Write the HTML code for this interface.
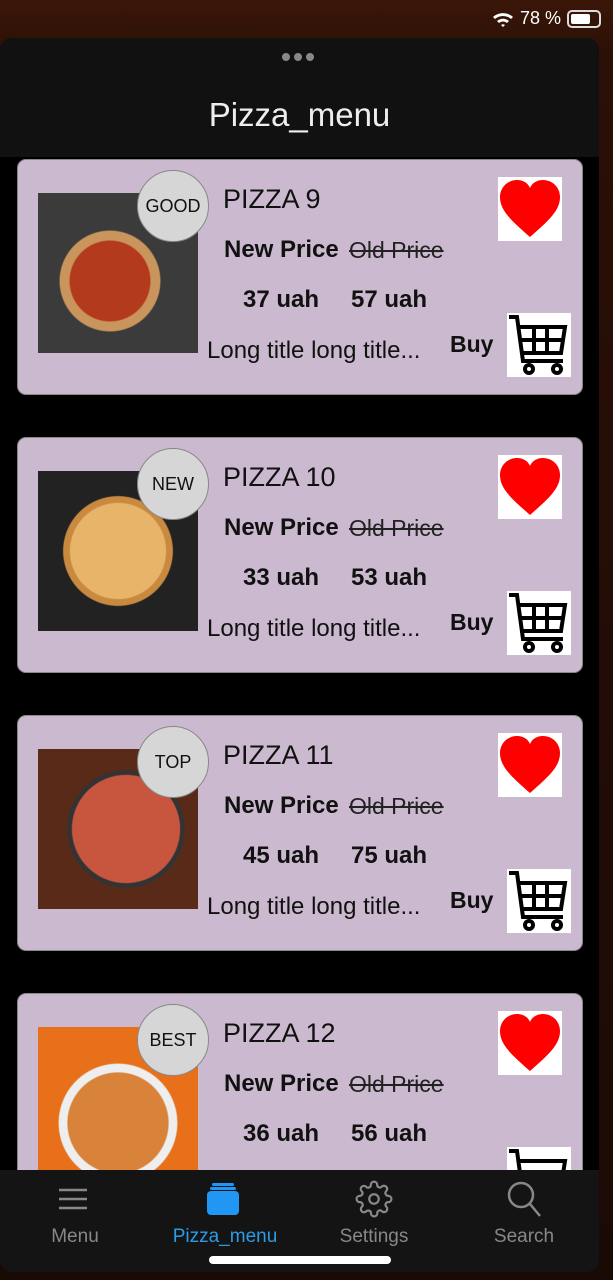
<!DOCTYPE html>
<html><head><meta charset="utf-8"><style>
*{margin:0;padding:0;box-sizing:border-box}
body{width:613px;height:1280px;overflow:hidden;background:linear-gradient(#3a1608,#2a1006 60px,#1a0a05);font-family:"Liberation Sans",sans-serif;position:relative}
.status{position:absolute;top:8px;right:12px;color:#fff;font-size:18px;display:flex;align-items:center;gap:6px}
.bat{width:34px;height:18px;border:2px solid #ddd;border-radius:5px;padding:2px;position:relative}
.bat i{display:block;width:72%;height:100%;background:#fff;border-radius:2px}
.sheet{position:absolute;left:0;top:38px;width:599px;height:1234px;background:#000;border-radius:12px;overflow:hidden}
.head{height:119px;background:#111;position:relative}
.dots{position:absolute;top:15px;left:282px;display:flex;gap:4px}
.dots i{width:8px;height:8px;border-radius:50%;background:#888}
.title{position:absolute;top:58px;width:100%;text-align:center;color:#eee;font-size:33px}
.card{position:absolute;left:17px;width:566px;height:236px;background:#cbbacf;border:1.5px solid #888;border-radius:9px}
.img{position:absolute;left:20px;top:33px;width:160px;height:160px;overflow:hidden}
.badge{position:absolute;left:119px;top:10px;width:72px;height:72px;border-radius:50%;background:#d6d6d6;border:1.5px solid #888;display:flex;align-items:center;justify-content:center;font-size:18px;color:#111}
.name{position:absolute;left:205px;top:24px;font-size:27px;color:#111}
.np{position:absolute;left:206px;top:76px;font-size:24px;font-weight:bold;color:#111}
.op{position:absolute;left:331px;top:77px;font-size:23px;text-decoration:line-through;color:#222}
.p1{position:absolute;left:225px;top:126px;font-size:24px;font-weight:bold;color:#111}
.p2{position:absolute;left:333px;top:126px;font-size:24px;font-weight:bold;color:#111}
.lt{position:absolute;left:189px;top:177px;font-size:24px;color:#111}
.buy{position:absolute;left:432px;top:171px;font-size:23px;font-weight:bold;color:#111}
.heart{position:absolute;left:480px;top:17px;width:64px;height:64px;background:#fff}
.cart{position:absolute;left:489px;top:153px;width:64px;height:64px;background:#fff}
.ti{position:absolute;font-size:19px;color:#888;text-align:center;width:150px}
.home{position:absolute;left:209px;top:1256px;width:182px;height:8px;border-radius:4px;background:#fff}
</style></head><body>
<div class="status"><svg width="22" height="16" viewBox="0 0 22 16"><path d="M1 6a15 15 0 0 1 20 0l-2 2a12 12 0 0 0-16 0zM5 10a9 9 0 0 1 12 0l-2 2a6 6 0 0 0-8 0zM9 14a3 3 0 0 1 4 0l-2 2z" fill="#fff"/></svg><span>78 %</span><div class="bat"><i></i></div></div>
<div class="sheet">
<div class="head"><div class="dots"><i></i><i></i><i></i></div><div class="title">Pizza_menu</div></div>
</div>

<div class="card" style="top:159px"><div class="img" style="background:radial-gradient(circle at 45% 55%,#b33a1c 0 32%,#c9955c 33% 40%,#3b3b3b 41%)"></div><div class="badge">GOOD</div><div class="name">PIZZA 9</div><div class="np">New Price</div><div class="op">Old Price</div><div class="p1">37 uah</div><div class="p2">57 uah</div><div class="lt">Long title long title...</div><div class="buy">Buy</div>
<div class="heart"><svg viewBox="0 0 64 64" width="64" height="64"><path d="M32 60C14 44 2 34 2 20 2 10 10 3 19 3c6 0 11 3 13 8 2-5 7-8 13-8 9 0 17 7 17 17 0 14-12 24-30 40z" fill="#f00"/></svg></div>
<div class="cart"><svg viewBox="0 0 64 64" width="64" height="64" fill="none" stroke="#000" stroke-width="4"><path d="M2 4h8l6 44h40"/><path d="M12 14h46l-4 26H15"/><path d="M27 14v26M40 14v26M13 27h43"/><circle cx="22" cy="56" r="4"/><circle cx="50" cy="56" r="4"/></svg></div></div>

<div class="card" style="top:437px"><div class="img" style="background:radial-gradient(circle at 50% 50%,#e8b46a 0 42%,#c98a40 43% 48%,#222 49%)"></div><div class="badge">NEW</div><div class="name">PIZZA 10</div><div class="np">New Price</div><div class="op">Old Price</div><div class="p1">33 uah</div><div class="p2">53 uah</div><div class="lt">Long title long title...</div><div class="buy">Buy</div>
<div class="heart"><svg viewBox="0 0 64 64" width="64" height="64"><path d="M32 60C14 44 2 34 2 20 2 10 10 3 19 3c6 0 11 3 13 8 2-5 7-8 13-8 9 0 17 7 17 17 0 14-12 24-30 40z" fill="#f00"/></svg></div>
<div class="cart"><svg viewBox="0 0 64 64" width="64" height="64" fill="none" stroke="#000" stroke-width="4"><path d="M2 4h8l6 44h40"/><path d="M12 14h46l-4 26H15"/><path d="M27 14v26M40 14v26M13 27h43"/><circle cx="22" cy="56" r="4"/><circle cx="50" cy="56" r="4"/></svg></div></div>

<div class="card" style="top:715px"><div class="img" style="background:radial-gradient(circle at 55% 50%,#c8563e 0 45%,#333 46% 49%,#5a2a18 50%)"></div><div class="badge">TOP</div><div class="name">PIZZA 11</div><div class="np">New Price</div><div class="op">Old Price</div><div class="p1">45 uah</div><div class="p2">75 uah</div><div class="lt">Long title long title...</div><div class="buy">Buy</div>
<div class="heart"><svg viewBox="0 0 64 64" width="64" height="64"><path d="M32 60C14 44 2 34 2 20 2 10 10 3 19 3c6 0 11 3 13 8 2-5 7-8 13-8 9 0 17 7 17 17 0 14-12 24-30 40z" fill="#f00"/></svg></div>
<div class="cart"><svg viewBox="0 0 64 64" width="64" height="64" fill="none" stroke="#000" stroke-width="4"><path d="M2 4h8l6 44h40"/><path d="M12 14h46l-4 26H15"/><path d="M27 14v26M40 14v26M13 27h43"/><circle cx="22" cy="56" r="4"/><circle cx="50" cy="56" r="4"/></svg></div></div>

<div class="card" style="top:993px"><div class="img" style="background:radial-gradient(circle at 50% 60%,#d9823a 0 40%,#eee 41% 47%,#e8701a 48%)"></div><div class="badge">BEST</div><div class="name">PIZZA 12</div><div class="np">New Price</div><div class="op">Old Price</div><div class="p1">36 uah</div><div class="p2">56 uah</div>
<div class="heart"><svg viewBox="0 0 64 64" width="64" height="64"><path d="M32 60C14 44 2 34 2 20 2 10 10 3 19 3c6 0 11 3 13 8 2-5 7-8 13-8 9 0 17 7 17 17 0 14-12 24-30 40z" fill="#f00"/></svg></div>
<div class="cart"><svg viewBox="0 0 64 64" width="64" height="64" fill="none" stroke="#000" stroke-width="4"><path d="M2 4h8l6 44h40"/><path d="M12 14h46l-4 26H15"/></svg></div></div>

<div style="position:absolute;left:0;top:1170px;width:599px;height:102px;background:#141414;border-radius:0 0 12px 12px">
<svg style="position:absolute;left:58px;top:18px" width="30" height="22"><path d="M1 2h28M1 11h28M1 20h28" stroke="#888" stroke-width="2.5"/></svg>
<svg style="position:absolute;left:206px;top:12px" width="34" height="34"><rect x="6" y="1" width="22" height="3" rx="1.5" fill="#2196f3"/><rect x="4" y="5" width="26" height="3" rx="1.5" fill="#2196f3"/><rect x="1" y="9" width="32" height="24" rx="4" fill="#2196f3"/></svg>
<svg style="position:absolute;left:355px;top:10px" width="38" height="38" viewBox="0 0 24 24" fill="none" stroke="#888" stroke-width="1.4"><circle cx="12" cy="12" r="3"/><path d="M19.4 15a1.65 1.65 0 0 0 .33 1.820l.06.06a2 2 0 1 1-2.83 2.83l-.06-.06a1.650 1.65 0 0 0-1.82-.33 1.65 1.65 0 0 0-1 1.51V21a2 2 0 1 1-4 0v-.09A1.65 1.65 0 0 0 9 19.4a1.65 1.65 0 0 0-1.82.33l-.06.06a2 2 0 1 1-2.83-2.83l.06-.06A1.65 1.65 0 0 0 4.68 15a1.65 1.65 0 0 0-1.51-1H3a2 2 0 1 1 0-4h.09A1.65 1.65 0 0 0 4.6 9a1.65 1.65 0 0 0-.33-1.82l-.06-.06a2 2 0 1 1 2.83-2.83l.06.06A1.65 1.65 0 0 0 9 4.68a1.65 1.65 0 0 0 1-1.51V3a2 2 0 1 1 4 0v.09a1.65 1.65 0 0 0 1 1.51 1.65 1.65 0 0 0 1.82-.33l.06-.06a2 2 0 1 1 2.830 2.83l-.06.06A1.65 1.65 0 0 0 19.4 9a1.65 1.65 0 0 0 1.51 1H21a2 2 0 1 1 0 4h-.09a1.65 1.65 0 0 0-1.51 1z"/></svg>
<svg style="position:absolute;left:506px;top:10px" width="36" height="38"><circle cx="15" cy="15" r="12" fill="none" stroke="#888" stroke-width="2.5"/><path d="M24 24l10 12" stroke="#888" stroke-width="2.5"/></svg>
<div class="ti" style="left:0;top:56px">Menu</div>
<div class="ti" style="left:150px;top:56px;color:#2a9be8">Pizza_menu</div>
<div class="ti" style="left:299px;top:56px">Settings</div>
<div class="ti" style="left:449px;top:56px">Search</div>
</div>
<div class="home"></div>
</body></html>
